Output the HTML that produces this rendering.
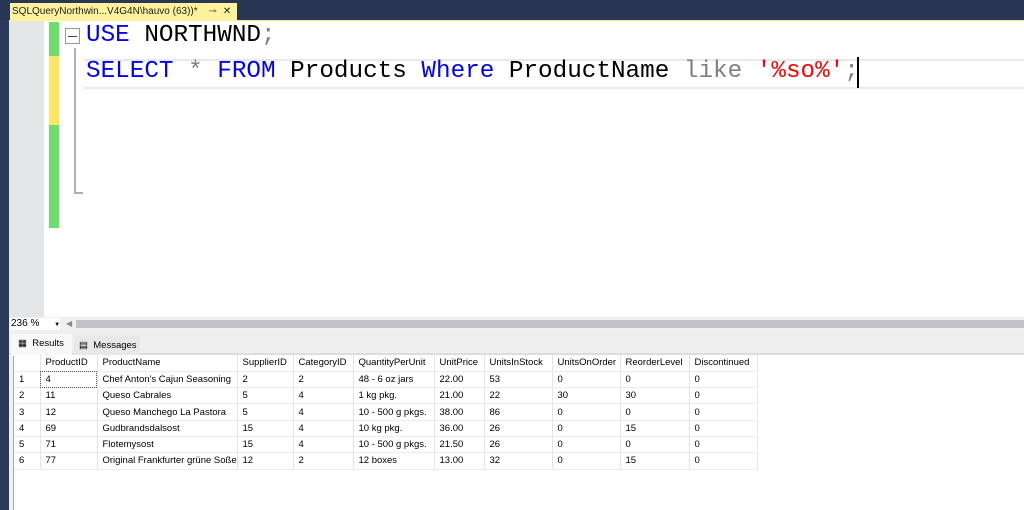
<!DOCTYPE html>
<html><head><style>
*{margin:0;padding:0;box-sizing:border-box}
body{width:1024px;height:510px;overflow:hidden;background:#fff;position:relative;font-family:"Liberation Sans",sans-serif}
.a{position:absolute}
.code{font-family:"Liberation Mono",monospace;font-size:24.3px;white-space:pre;line-height:28px}
.k{color:#0000ff}.g{color:#808080}.r{color:#ff0000}
table{border-collapse:collapse;font-size:9.5px;color:#000;table-layout:fixed;width:743px}
td{height:16.3px;padding:0 0 0 5px;border-right:1px solid #e4e4e4;border-bottom:1px solid #ececec;white-space:nowrap;overflow:hidden}
</style></head><body>
<div class="a" style="left:0;top:0;width:1024px;height:20px;background:#293755"></div>
<div class="a" style="left:0;top:20px;width:1024px;height:1px;background:#f5e98a"></div>
<div class="a" style="left:10px;top:3px;width:227px;height:18px;background:#fff29d;font-size:10px;line-height:17px;padding-left:2px;color:#1e1e1e;white-space:nowrap">SQLQueryNorthwin...V4G4N\hauvo (63))* <span style="color:#666;margin-left:8px">⊸</span><span style="margin-left:6px">✕</span></div>
<div class="a" style="left:0;top:20px;width:9px;height:490px;background:#2b3a5b"></div>
<div class="a" style="left:9px;top:21px;width:35px;height:296px;background:#e5e6e8"></div>
<div class="a" style="left:49px;top:22px;width:10px;height:34px;background:#6bdd6b"></div>
<div class="a" style="left:49px;top:56px;width:10px;height:69px;background:#ffe560"></div>
<div class="a" style="left:49px;top:125px;width:10px;height:103px;background:#6bdd6b"></div>
<div class="a" style="left:65px;top:28px;width:15px;height:16px;border:1px solid #999;background:#fff"></div>
<div class="a" style="left:68px;top:36px;width:9px;height:1px;background:#444"></div>
<div class="a" style="left:74px;top:48px;width:2px;height:145px;background:#b0b0b0"></div>
<div class="a" style="left:74px;top:192px;width:9px;height:2px;background:#b0b0b0"></div>
<div class="a" style="left:84px;top:59px;width:940px;height:30px;border-top:2px solid #e8e8ef;border-bottom:2px solid #e8e8ef"></div>
<div class="a code" style="left:86px;top:22px"><span class="k">USE</span> NORTHWND<span class="g">;</span></div>
<div class="a code" style="left:86px;top:58px"><span class="k">SELECT</span> <span class="g">*</span> <span class="k">FROM</span> Products <span class="k">Where</span> ProductName <span class="g">like</span> <span class="r">'%so%'</span><span class="g">;</span></div>
<div class="a" style="left:857px;top:57px;width:2px;height:31px;background:#000"></div>
<div class="a" style="left:9px;top:317px;width:1015px;height:14px;background:#f0f0f0"></div>
<div class="a" style="left:10px;top:318px;width:50px;height:12px;background:#fff;font-size:10px;line-height:12px;padding-left:1px;white-space:nowrap">236 % <span style="font-size:6px;margin-left:12px">▼</span></div>
<div class="a" style="left:66px;top:318px;font-size:8px;color:#888;line-height:12px">◀</div>
<div class="a" style="left:76px;top:320px;width:948px;height:8px;background:#c2c3c9"></div>
<div class="a" style="left:9px;top:331px;width:1015px;height:24px;background:#efefef;border-bottom:2px solid #ddd"></div>
<div class="a" style="left:11px;top:334px;width:61px;height:21px;background:#f8f8f8;font-size:9.5px;line-height:20px;padding-left:7px">▦ &nbsp;Results</div>
<div class="a" style="left:74px;top:336px;width:66px;height:19px;background:#e8e8e8;font-size:9.5px;line-height:19px;padding-left:5px">▤ &nbsp;Messages</div>
<div class="a" style="left:9px;top:356px;width:4px;height:154px;background:#f0f0f0"></div>
<div class="a" style="left:13px;top:356px;width:1px;height:154px;background:#aaa"></div>
<table class="a" style="left:14px;top:355px">
<colgroup><col style="width:26px"><col style="width:57px"><col style="width:140px"><col style="width:56px"><col style="width:60px"><col style="width:81px"><col style="width:50px"><col style="width:68px"><col style="width:68px"><col style="width:69px"><col style="width:68px"></colgroup>
<tr><td></td><td>ProductID</td><td>ProductName</td><td>SupplierID</td><td>CategoryID</td><td>QuantityPerUnit</td><td>UnitPrice</td><td>UnitsInStock</td><td>UnitsOnOrder</td><td>ReorderLevel</td><td>Discontinued</td></tr>
<tr><td>1</td><td style="outline:1px dotted #555;outline-offset:-1px">4</td><td>Chef Anton's Cajun Seasoning</td><td>2</td><td>2</td><td>48 - 6 oz jars</td><td>22.00</td><td>53</td><td>0</td><td>0</td><td>0</td></tr>
<tr><td>2</td><td>11</td><td>Queso Cabrales</td><td>5</td><td>4</td><td>1 kg pkg.</td><td>21.00</td><td>22</td><td>30</td><td>30</td><td>0</td></tr>
<tr><td>3</td><td>12</td><td>Queso Manchego La Pastora</td><td>5</td><td>4</td><td>10 - 500 g pkgs.</td><td>38.00</td><td>86</td><td>0</td><td>0</td><td>0</td></tr>
<tr><td>4</td><td>69</td><td>Gudbrandsdalsost</td><td>15</td><td>4</td><td>10 kg pkg.</td><td>36.00</td><td>26</td><td>0</td><td>15</td><td>0</td></tr>
<tr><td>5</td><td>71</td><td>Flotemysost</td><td>15</td><td>4</td><td>10 - 500 g pkgs.</td><td>21.50</td><td>26</td><td>0</td><td>0</td><td>0</td></tr>
<tr><td>6</td><td>77</td><td>Original Frankfurter grüne Soße</td><td>12</td><td>2</td><td>12 boxes</td><td>13.00</td><td>32</td><td>0</td><td>15</td><td>0</td></tr>
</table>
</body></html>
